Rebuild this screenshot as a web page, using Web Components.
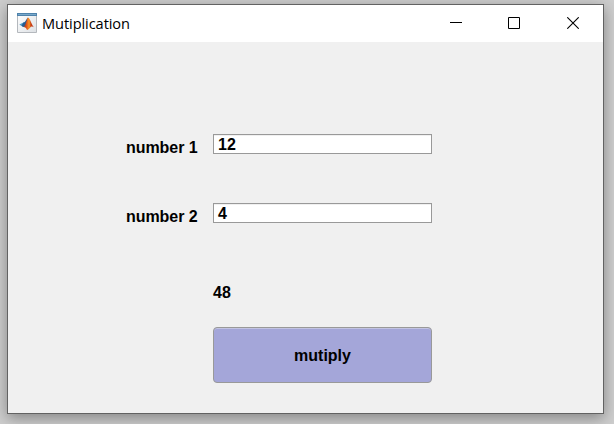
<!DOCTYPE html>
<html lang="en">
<head>
<meta charset="utf-8">
<title>Mutiplication</title>
<style>
html,body{margin:0;height:100%;overflow:hidden}
body{background:#cecece;font-family:"Liberation Sans",Arial,sans-serif;color:#000}
</style>
</head>
<body>
<app-window>
  <title-bar slot="title">Mutiplication</title-bar>
  <form-row><span slot="label">number 1</span><number-field>12</number-field></form-row>
  <form-row><span slot="label">number 2</span><number-field>4</number-field></form-row>
  <result-text>48</result-text>
  <push-button>mutiply</push-button>
</app-window>
<script>
const define = (name, markup) => customElements.define(name, class extends HTMLElement {
  constructor() {
    super();
    this.attachShadow({mode: 'open'}).innerHTML = markup;
  }
});

define('app-window', `
<style>
:host{display:flex;flex-direction:column;box-sizing:border-box;width:597px;height:410px;margin:4px 0 0 7px;
  border:1px solid #626262;background:#f0f0f0;box-shadow:0 4px 14px rgba(0,0,0,.36)}
main{display:flex;flex-direction:column;align-items:flex-start;padding:92px 0 0 118px;font-weight:bold;font-size:16px;line-height:18px}
</style>
<slot name="title"></slot><main><slot></slot></main>`);

define('title-bar', `
<style>
:host{display:flex;align-items:flex-start;box-sizing:border-box;height:37px;background:#fff;padding:8px 0 0 9px;
  font:14.6px/20px "Open Sans","Segoe UI",sans-serif}
svg{display:block;flex:none}
.name{flex:1;padding-left:5px;letter-spacing:-.08px}
.controls{display:grid;grid-template-columns:58px 59px 12px;padding:4px 24px 0 0}
</style>
<svg width="20" height="20" viewBox="0 0 20 20">
  <defs>
    <linearGradient id="bg" x2="1" y2="1"><stop stop-color="#fff"/><stop offset="1" stop-color="#dce0e4"/></linearGradient>
    <linearGradient id="flame" x2="1" y2="0"><stop stop-color="#8b2419"/><stop offset=".35" stop-color="#e65a1a"/><stop offset=".55" stop-color="#f79b28"/><stop offset=".72" stop-color="#c83c14"/><stop offset="1" stop-color="#b8361b"/></linearGradient>
  </defs>
  <path d="M.5 .5h19v19H.5z" fill="url(#bg)" stroke="#b4b8bd"/>
  <path d="M0 0h20v3H0z" fill="#4e82ab"/><path d="M1 1h18v1H1z" fill="#78a8ca"/>
  <path d="M2.3 11.6 7 9.3 9.2 12 6.2 14z" fill="#4c9ac4"/>
  <path d="M6.4 9.6C9 8.9 9.2 6 11 4.5L9.2 12.5 6.2 14 4.6 12.7z" fill="#285c91"/>
  <path d="M11 4.5c2.2 1 3.4 7.2 6 9.8-2-1.3-3.1-.7-4 .5-.9 1.1-1.9 2-3 2.1-.8-1.7-1.7-3-3.8-2.9C9 12.9 9.3 7 11 4.5z" fill="url(#flame)"/>
</svg>
<span class="name"><slot></slot></span>
<span class="controls">
  <svg width="12" height="12"><path d="M0 5h12v1H0z"/></svg>
  <svg width="12" height="12"><path d="M.5 .5h11v11H.5z" fill="none" stroke="#000"/></svg>
  <svg width="12" height="12"><path d="M.3 .3 11.7 11.7M11.7 .3 .3 11.7" fill="none" stroke="#000" stroke-width="1.1"/></svg>
</span>`);

define('form-row', `
<style>
:host{display:grid;grid-template-columns:87px 219px;height:20px;margin-bottom:49px}
.label{padding-top:5px;white-space:nowrap;letter-spacing:-.06px}
</style>
<span class="label"><slot name="label"></slot></span><slot></slot>`);

define('number-field', `
<style>
:host{display:block;box-sizing:border-box;height:20px;padding-left:4px;border:1px solid #999;background:#fff;box-shadow:inset 0 1px #f0f0f0;line-height:19px}
</style><slot></slot>`);

define('result-text', `
<style>:host{display:block;margin:12px 0 0 87px;height:43px}</style><slot></slot>`);

define('push-button', `
<style>
:host{display:flex;align-items:center;justify-content:center;box-sizing:border-box;width:219px;height:56px;margin-left:87px;padding-top:2px;
  border:1px solid #999;border-radius:4px;background:#a4a6d9;box-shadow:inset 0 1px #c2c3e3}
</style><slot></slot>`);
</script>
</body>
</html>
